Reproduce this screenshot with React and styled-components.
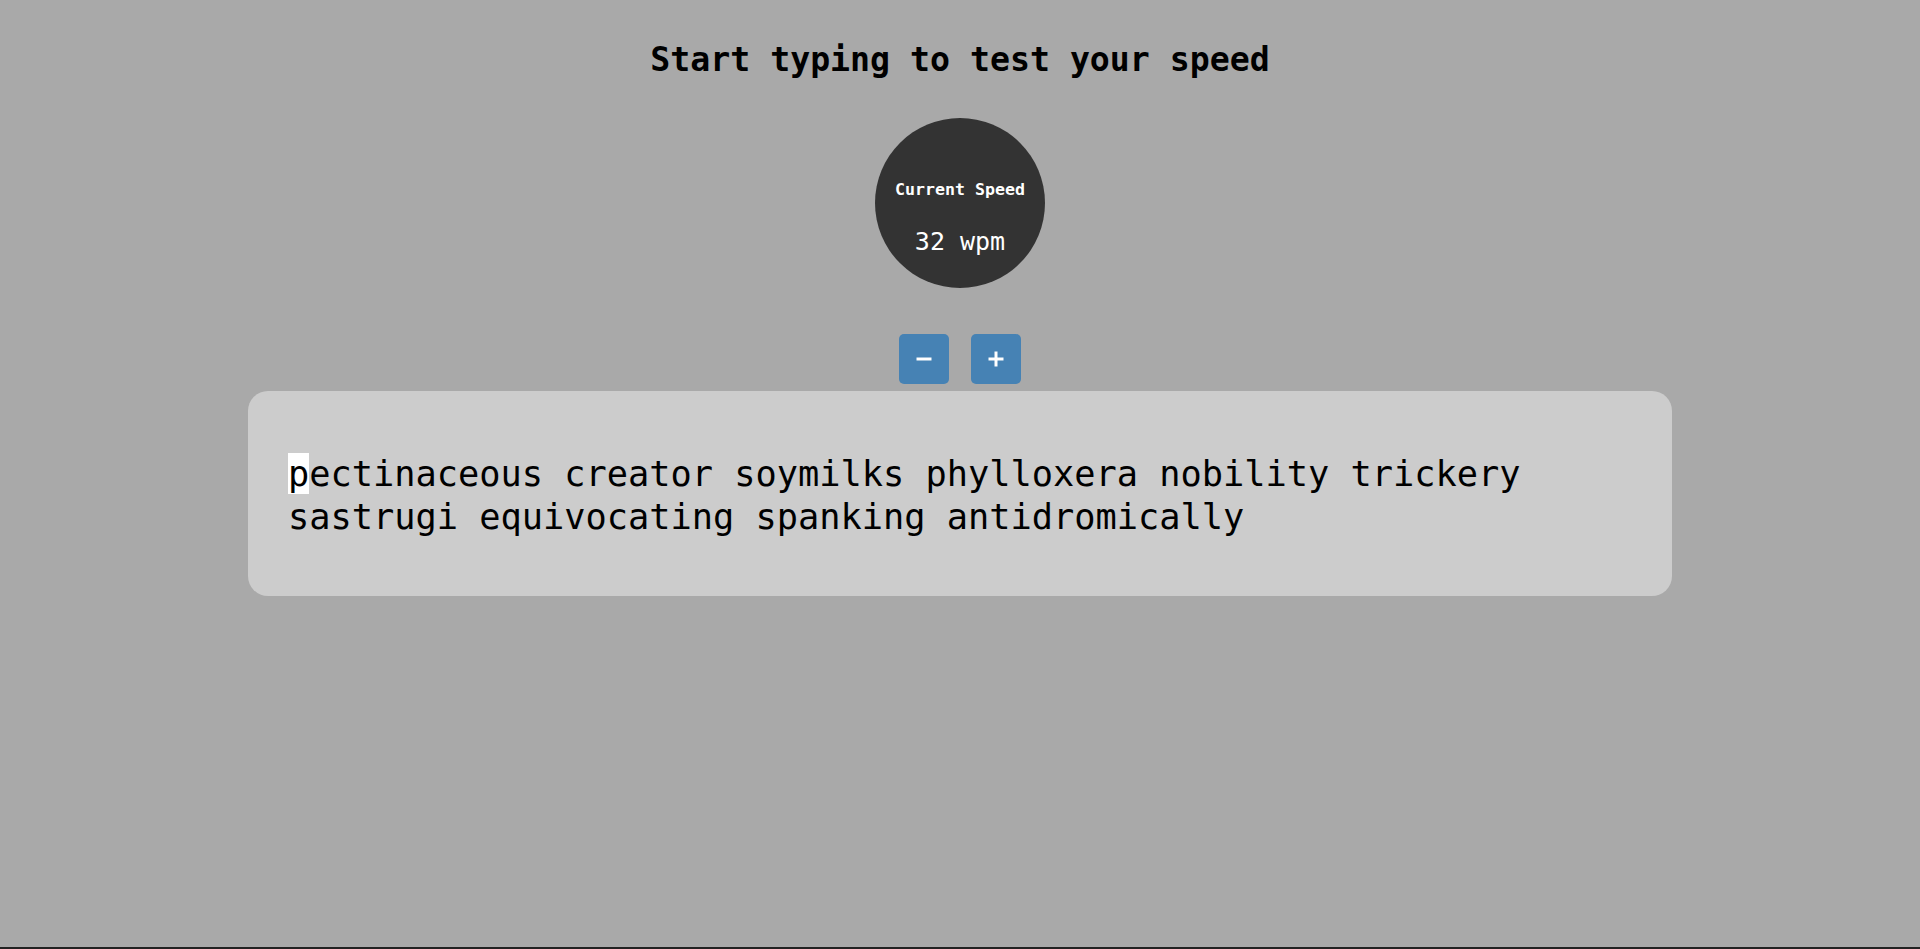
import React from 'react'
import styled, { createGlobalStyle } from 'styled-components'

const GlobalStyle = createGlobalStyle`
  html, body {
    margin: 0;
    padding: 0;
    background: #a9a9a9;
  }
  body {
    font-family: "DejaVu Sans Mono", "Liberation Mono", monospace;
    color: #000;
  }
`

const words = 'pectinaceous creator soymilks phylloxera nobility trickery sastrugi equivocating spanking antidromically'

export default function App () {
  const current = words[0]
  const rest = words.slice(1)

  return (
    <Page>
      <GlobalStyle />
      <Main>
        <Title>Start typing to test your speed</Title>
        <Gauge>
          <GaugeLabel>Current Speed</GaugeLabel>
          <GaugeValue>32 wpm</GaugeValue>
        </Gauge>
        <Controls>
          <ControlButton aria-label='decrease'>
            <svg width='16' height='16' viewBox='0 0 16 16'>
              <line x1='0.5' y1='8' x2='15.5' y2='8' stroke='#fff' strokeWidth='3' />
            </svg>
          </ControlButton>
          <ControlButton aria-label='increase'>
            <svg width='16' height='16' viewBox='0 0 16 16'>
              <line x1='0.5' y1='8' x2='15.5' y2='8' stroke='#fff' strokeWidth='3' />
              <line x1='8' y1='0.5' x2='8' y2='15.5' stroke='#fff' strokeWidth='3' />
            </svg>
          </ControlButton>
        </Controls>
        <TextPanel>
          <Words>
            <Cursor>{current}</Cursor>{rest}
          </Words>
        </TextPanel>
      </Main>
      <BottomEdge />
    </Page>
  )
}

const Page = styled.div`
  min-height: 100vh;
  display: flex;
  flex-direction: column;
`

const Main = styled.main`
  flex: 1;
  display: flex;
  flex-direction: column;
  align-items: center;
`

const Title = styled.h1`
  margin: 40px 0 0;
  font-size: 33.2px;
  line-height: 40px;
  font-weight: bold;
  text-align: center;
`

const Gauge = styled.div`
  margin-top: 38px;
  width: 170px;
  height: 170px;
  border-radius: 50%;
  background: #333333;
  color: #fff;
  display: flex;
  flex-direction: column;
  align-items: center;
  padding-top: 62px;
  box-sizing: border-box;
`

const GaugeLabel = styled.div`
  font-size: 16.6px;
  font-weight: bold;
  line-height: 20px;
`

const GaugeValue = styled.div`
  margin-top: 27px;
  font-size: 25px;
  line-height: 30px;
`

const Controls = styled.div`
  margin-top: 46px;
  display: flex;
  gap: 22px;
`

const ControlButton = styled.button`
  width: 50px;
  height: 50px;
  padding: 0;
  border: none;
  border-radius: 5px;
  background: #4682b4;
  display: flex;
  align-items: center;
  justify-content: center;
  cursor: pointer;
`

const TextPanel = styled.div`
  margin-top: 7px;
  width: 1424px;
  box-sizing: border-box;
  padding: 60px 40px 58px;
  border-radius: 20px;
  background: #cccccc;
`

const Words = styled.p`
  margin: 0;
  padding-top: 2px;
  font-size: 35.3px;
  line-height: 42.5px;
  color: #000;
`

const Cursor = styled.span`
  background: #fff;
`

const BottomEdge = styled.div`
  height: 2px;
  background: #222;
`
